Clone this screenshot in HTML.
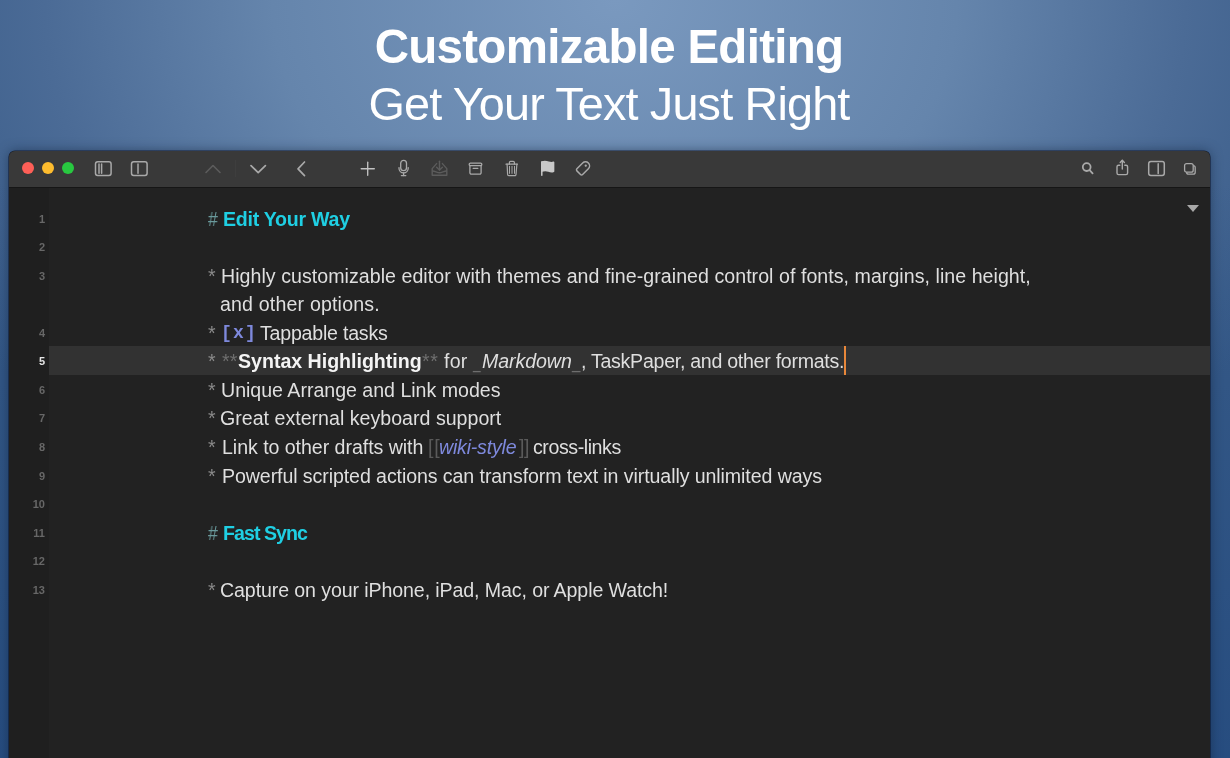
<!DOCTYPE html>
<html><head><meta charset="utf-8"><style>
html,body{margin:0;padding:0;width:1230px;height:758px;overflow:hidden}
body{position:relative;font-family:"Liberation Sans",sans-serif;
background:linear-gradient(to bottom,rgba(30,70,120,0) 0px,rgba(30,70,120,0) 180px,rgba(25,65,120,.55) 758px),radial-gradient(ellipse 760px 620px at 615px 0px,#7a99bf 0%,#6585ac 45%,#4b6b96 75%,#385b88 100%);}
.t1{position:absolute;will-change:transform;left:-6px;width:1230px;text-align:center;top:17px;font-weight:bold;font-size:47.5px;letter-spacing:-0.71px;color:#fff;line-height:60px;white-space:pre}
.t2{position:absolute;will-change:transform;left:-6px;width:1230px;text-align:center;top:74px;font-size:46.8px;letter-spacing:-0.84px;color:#fff;line-height:60px;white-space:pre}
.win{position:absolute;left:9px;top:150.5px;width:1201.3px;height:640px;border-radius:6px 6px 0 0;overflow:hidden;background:#222222;box-shadow:0 0 0 0.6px rgba(5,10,30,.7),0 0 12px rgba(10,25,50,.5)}
.bar{position:absolute;left:0;top:0;width:1201.3px;height:36.5px;background:#393939;border-bottom:1px solid #161616}
.gut{position:absolute;left:0;top:37.5px;width:40px;height:620px;background:#1f1f1f}
.hl{position:absolute;left:40px;top:195.8px;width:1161px;height:28.5px;background:#323232}
.dot{position:absolute;top:11.9px;width:12px;height:12px;border-radius:50%}
.ln{position:absolute;will-change:transform;left:0;width:45px;text-align:right;font-size:11px;font-weight:bold;line-height:28.55px;color:#676767}
.cur5{color:#e4e4e4;font-weight:bold}
.tx{position:absolute;white-space:pre;will-change:transform;font-size:19.6px;color:#dfdfdf;line-height:28.55px}
.m{color:#8a8a8a}
.mh{color:#6a9a9c}
.m2{color:#6e6e6e}
.m3{color:#5a5a5a}
.h{color:#1fcfe3;font-weight:bold}
.b{font-weight:bold;color:#f4f4f4}
.i{font-style:italic}
.p{color:#7e89dc}
.mono{font-family:"Liberation Mono",monospace;font-weight:bold;font-size:18px}
.cur{position:absolute;width:2px;height:29px;background:#e8873a}
.tri{position:absolute;left:1187px;top:205px;width:0;height:0;border-left:6px solid transparent;border-right:6px solid transparent;border-top:7px solid #a8a8a8}
</style></head><body>
<div class="t1">Customizable Editing</div>
<div class="t2">Get Your Text Just Right</div>
<div class="win"><div class="bar"><div class="dot" style="left:12.7px;background:#fe5f57"></div><div class="dot" style="left:32.9px;background:#febc2e"></div><div class="dot" style="left:53px;background:#28c840"></div></div><div class="gut"></div><div class="hl"></div></div>
<svg style="position:absolute;left:93px;top:159px" width="20" height="19" viewBox="0 0 20 19" fill="none" stroke="#a9a9a9" stroke-width="1.5" stroke-linecap="round" stroke-linejoin="round"><rect x="2.5" y="2.8" width="15.6" height="13.6" rx="2.2"/><line x1="6" y1="5" x2="6" y2="14.2"/><line x1="8.6" y1="5" x2="8.6" y2="14.2"/></svg>
<svg style="position:absolute;left:129px;top:159px" width="20" height="19" viewBox="0 0 20 19" fill="none" stroke="#a9a9a9" stroke-width="1.5" stroke-linecap="round" stroke-linejoin="round"><rect x="2.5" y="2.8" width="15.6" height="13.6" rx="2.2"/><line x1="9" y1="5" x2="9" y2="14.2"/></svg>
<svg style="position:absolute;left:203px;top:162px" width="20" height="14" viewBox="0 0 20 14" fill="none" stroke="#5c5c5c" stroke-width="1.6" stroke-linecap="round" stroke-linejoin="round"><polyline points="3,10.5 10,3.5 17,10.5"/></svg>
<div style="position:absolute;left:235px;top:160px;width:1px;height:17px;background:#3e3e3e"></div>
<svg style="position:absolute;left:248px;top:162px" width="20" height="14" viewBox="0 0 20 14" fill="none" stroke="#a9a9a9" stroke-width="1.7" stroke-linecap="round" stroke-linejoin="round"><polyline points="3,3.6 10.2,10.6 17.4,3.6"/></svg>
<svg style="position:absolute;left:294px;top:159px" width="14" height="20" viewBox="0 0 14 20" fill="none" stroke="#a9a9a9" stroke-width="1.7" stroke-linecap="round" stroke-linejoin="round"><polyline points="10.5,3 4,9.8 10.5,16.6"/></svg>
<svg style="position:absolute;left:358px;top:159px" width="20" height="20" viewBox="0 0 20 20" fill="none" stroke="#c2c2c2" stroke-width="1.35" stroke-linecap="round" stroke-linejoin="round"><line x1="9.7" y1="3.2" x2="9.7" y2="16.3"/><line x1="3.2" y1="9.7" x2="16.3" y2="9.7"/></svg>
<svg style="position:absolute;left:396px;top:157px" width="16" height="22" viewBox="0 0 16 22" fill="none" stroke="#a9a9a9" stroke-width="1.3" stroke-linecap="round" stroke-linejoin="round"><rect x="4.7" y="3.4" width="5.8" height="10.2" rx="2.9"/><path d="M3 10.6 v0.6 a4.6 4.6 0 0 0 9.2 0 v-0.6"/><line x1="7.6" y1="15.9" x2="7.6" y2="18.6"/><line x1="5.4" y1="18.6" x2="9.8" y2="18.6"/></svg>
<svg style="position:absolute;left:429px;top:159px" width="21" height="19" viewBox="0 0 21 19" fill="none" stroke="#5c5c5c" stroke-width="1.4" stroke-linecap="round" stroke-linejoin="round"><path d="M7.6 4.6 L3.2 9.6 V16.2 H17.8 V9.6 L13.4 4.6"/><path d="M3.6 12 C6 12 8 13.8 10.5 13.8 C13 13.8 15 12 17.4 12"/><line x1="10.5" y1="2.2" x2="10.5" y2="11"/><polyline points="7.6,8.2 10.5,11 13.4,8.2"/></svg>
<svg style="position:absolute;left:466px;top:160px" width="18" height="17" viewBox="0 0 18 17" fill="none" stroke="#a9a9a9" stroke-width="1.3" stroke-linecap="round" stroke-linejoin="round"><rect x="3.2" y="3.1" width="12.6" height="2.6" rx="1.2"/><path d="M3.9 5.7 V12.8 a1.4 1.4 0 0 0 1.4 1.4 H13.7 a1.4 1.4 0 0 0 1.4 -1.4 V5.7"/><line x1="7.2" y1="8.4" x2="11.8" y2="8.4"/></svg>
<svg style="position:absolute;left:503px;top:159px" width="17" height="20" viewBox="0 0 17 20" fill="none" stroke="#a9a9a9" stroke-width="1.2" stroke-linecap="round" stroke-linejoin="round"><line x1="3" y1="5.2" x2="14.4" y2="5.2"/><path d="M6.4 5.2 V3.6 a1.2 1.2 0 0 1 1.2 -1.2 H10.2 a1.2 1.2 0 0 1 1.2 1.2 V5.2"/><path d="M4.1 5.2 L4.6 15.4 a1.2 1.2 0 0 0 1.2 1.2 H11.8 a1.2 1.2 0 0 0 1.2 -1.2 L13.9 5.2"/><line x1="6.5" y1="7.3" x2="6.5" y2="14.4" stroke-width="1"/><line x1="9" y1="7.3" x2="9" y2="14.4" stroke-width="1"/><line x1="11.5" y1="7.3" x2="11.5" y2="14.4" stroke-width="1"/></svg>
<svg style="position:absolute;left:538px;top:159px" width="19" height="19" viewBox="0 0 19 19" fill="none" stroke="#c9c9c9" stroke-width="1.5" stroke-linecap="round" stroke-linejoin="round"><line x1="3.8" y1="3.2" x2="3.8" y2="16.2"/><path d="M3.8 3 C6.3 2.2 8.6 2.5 10.6 3.2 C12.4 3.8 14.3 3.8 15.6 3.3 V12.2 C14.3 12.8 12.4 12.7 10.6 12 C8.6 11.3 6.3 11.2 3.8 12 Z" fill="#c9c9c9" stroke="#c9c9c9"/></svg>
<svg style="position:absolute;left:573px;top:159px" width="20" height="19" viewBox="0 0 20 19" fill="none" stroke="#a9a9a9" stroke-width="1.4" stroke-linecap="round" stroke-linejoin="round"><g transform="translate(10.5 8.9) rotate(-45) scale(1.06)"><path d="M-5 -3.8 H2.7 A3.8 3.8 0 0 1 2.7 3.8 H-5 A1.4 1.4 0 0 1 -6.4 2.4 V-2.4 A1.4 1.4 0 0 1 -5 -3.8 Z"/><circle cx="3" cy="0" r="1.05" fill="#a9a9a9" stroke="none"/></g></svg>
<svg style="position:absolute;left:1079px;top:160px" width="17" height="17" viewBox="0 0 17 17" fill="none" stroke="#a9a9a9" stroke-width="1.8" stroke-linecap="round" stroke-linejoin="round"><circle cx="7.7" cy="7.1" r="3.9"/><line x1="10.6" y1="10.1" x2="13.6" y2="13.3"/></svg>
<svg style="position:absolute;left:1114px;top:157px" width="17" height="21" viewBox="0 0 17 21" fill="none" stroke="#a9a9a9" stroke-width="1.4" stroke-linecap="round" stroke-linejoin="round"><path d="M5.8 8.2 H4.6 a1.6 1.6 0 0 0 -1.6 1.6 V16 a1.6 1.6 0 0 0 1.6 1.6 H12 a1.6 1.6 0 0 0 1.6 -1.6 V9.8 a1.6 1.6 0 0 0 -1.6 -1.6 H10.8"/><line x1="8.3" y1="3.4" x2="8.3" y2="12"/><polyline points="6.2,5.4 8.3,3.2 10.4,5.4"/></svg>
<svg style="position:absolute;left:1146px;top:159px" width="21" height="20" viewBox="0 0 21 20" fill="none" stroke="#a9a9a9" stroke-width="1.5" stroke-linecap="round" stroke-linejoin="round"><rect x="2.7" y="2.6" width="15.6" height="13.8" rx="2.2"/><line x1="12.2" y1="4.8" x2="12.2" y2="14.4"/></svg>
<svg style="position:absolute;left:1182px;top:161px" width="16" height="17" viewBox="0 0 16 17" fill="none" stroke="#a9a9a9" stroke-width="1.3" stroke-linecap="round" stroke-linejoin="round"><rect x="4.6" y="4.6" width="8.6" height="8.6" rx="2"/><rect x="2.6" y="2.6" width="8.6" height="8.6" rx="2" fill="#393939"/></svg>
<div class="tri"></div>
<div class="tx mh" style="left:208.2px;top:204.60px;transform:scaleX(0.882);transform-origin:0 0;">#</div>
<div class="tx h" style="left:222.8px;top:204.60px;letter-spacing:-0.267px;">Edit Your Way</div>
<div class="tx m" style="left:208.3px;top:261.70px;">*</div>
<div class="tx " style="left:220.5px;top:261.70px;letter-spacing:0.04px;">Highly customizable editor with themes and fine-grained control of fonts, margins, line height,</div>
<div class="tx " style="left:220.1px;top:290.25px;letter-spacing:0.165px;">and other options.</div>
<div class="tx m" style="left:208.3px;top:318.80px;">*</div>
<div class="tx p mono" style="left:220.8px;top:318.80px;letter-spacing:1.2px;">[x]</div>
<div class="tx " style="left:259.9px;top:318.80px;letter-spacing:-0.223px;">Tappable tasks</div>
<div class="tx m" style="left:208.3px;top:347.35px;">*</div>
<div class="tx m2" style="left:221.5px;top:347.35px;letter-spacing:0.2px;">**</div>
<div class="tx b" style="left:238px;top:347.35px;letter-spacing:-0.017px;">Syntax Highlighting</div>
<div class="tx m2" style="left:422.3px;top:347.35px;letter-spacing:0.5px;">**</div>
<div class="tx " style="left:443.5px;top:347.35px;letter-spacing:0.25px;">for</div>
<div class="tx m2" style="left:472.69px;top:347.35px;transform:scaleX(0.692);transform-origin:0 0;">_</div>
<div class="tx i" style="left:481.7px;top:347.35px;letter-spacing:-0.086px;">Markdown</div>
<div class="tx m2" style="left:571.77px;top:347.35px;transform:scaleX(0.769);transform-origin:0 0;">_</div>
<div class="tx " style="left:580.7px;top:347.35px;letter-spacing:-0.283px;">, TaskPaper, and other formats.</div>
<div class="tx m" style="left:208.3px;top:375.90px;">*</div>
<div class="tx " style="left:221px;top:375.90px;letter-spacing:-0.018px;">Unique Arrange and Link modes</div>
<div class="tx m" style="left:208.3px;top:404.45px;">*</div>
<div class="tx " style="left:220.2px;top:404.45px;letter-spacing:0.01px;">Great external keyboard support</div>
<div class="tx m" style="left:208.3px;top:433.00px;">*</div>
<div class="tx " style="left:221.5px;top:433.00px;letter-spacing:-0.05px;">Link to other drafts with</div>
<div class="tx m3" style="left:427.6px;top:433.00px;letter-spacing:0.9px;">[[</div>
<div class="tx p i" style="left:439.3px;top:433.00px;letter-spacing:-0.211px;">wiki-style</div>
<div class="tx m3" style="left:518.5px;top:433.00px;letter-spacing:-0.5px;">]]</div>
<div class="tx " style="left:533.3px;top:433.00px;letter-spacing:-0.43px;">cross-links</div>
<div class="tx m" style="left:208.3px;top:461.55px;">*</div>
<div class="tx " style="left:221.5px;top:461.55px;letter-spacing:-0.092px;">Powerful scripted actions can transform text in virtually unlimited ways</div>
<div class="tx mh" style="left:208.3px;top:518.65px;transform:scaleX(0.882);transform-origin:0 0;">#</div>
<div class="tx h" style="left:222.9px;top:518.65px;letter-spacing:-0.95px;">Fast Sync</div>
<div class="tx m" style="left:208.3px;top:575.75px;">*</div>
<div class="tx " style="left:220.1px;top:575.75px;letter-spacing:-0.106px;">Capture on your iPhone, iPad, Mac, or Apple Watch!</div>
<div class="cur" style="left:844px;top:346px"></div>
<div class="ln" style="top:204.60px">1</div>
<div class="ln" style="top:233.15px">2</div>
<div class="ln" style="top:261.70px">3</div>
<div class="ln" style="top:318.80px">4</div>
<div class="ln cur5" style="top:347.35px">5</div>
<div class="ln" style="top:375.90px">6</div>
<div class="ln" style="top:404.45px">7</div>
<div class="ln" style="top:433.00px">8</div>
<div class="ln" style="top:461.55px">9</div>
<div class="ln" style="top:490.10px">10</div>
<div class="ln" style="top:518.65px">11</div>
<div class="ln" style="top:547.20px">12</div>
<div class="ln" style="top:575.75px">13</div>
</body></html>
